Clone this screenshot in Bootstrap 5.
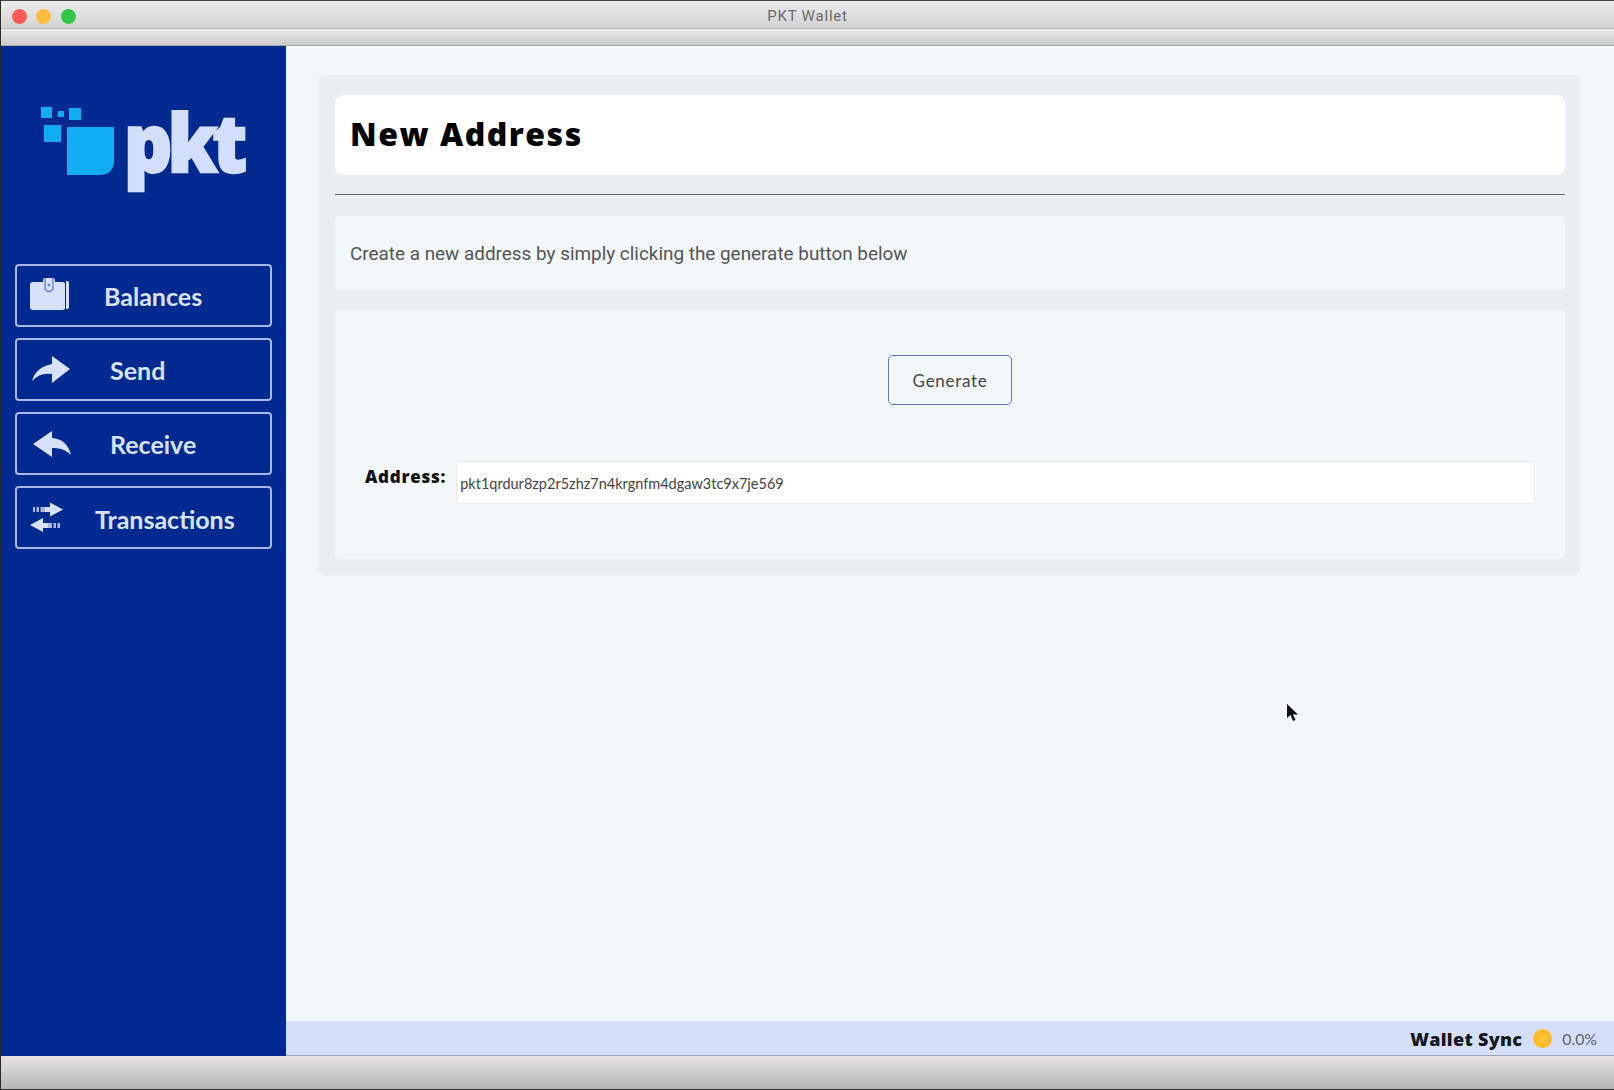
<!DOCTYPE html>
<html lang="en">
<head>
<meta charset="utf-8">
<title>PKT Wallet</title>
<link href="https://cdn.jsdelivr.net/npm/bootstrap@5.3.0/dist/css/bootstrap.min.css" rel="stylesheet">
<style>
html,body{height:100%;margin:0}
body{background:#333;overflow:hidden;font-family:"Lato","Liberation Sans",sans-serif}
.win{height:1090px;width:1614px;border-top:1px solid #444;border-left:1px solid #2a2a2a}
.tbar{height:28px;background:linear-gradient(#ebebeb,#d3d3d3);border-bottom:1px solid #b4b4b4;font:15px "Roboto","Liberation Sans",sans-serif;color:#6b6b6b;letter-spacing:.8px;padding-top:3px}
.lights{left:10.500px;top:8px;gap:9.500px}
.light{width:15px;height:15px;border-radius:50%}
.tool{height:17px;background:linear-gradient(#e9e9e9,#cbcbcb);border-bottom:1px solid #a9a9a9}
.mid{height:1010px}
.side{width:285px;background:#002a8f}
.logo{margin:61px 0 0 37px;height:90px}
.logo svg{overflow:visible}
.logo-word{font-family:"Open Sans",sans-serif;font-weight:800;font-size:80px;letter-spacing:-5px;fill:#d2defa;stroke:#d2defa;stroke-width:2.500px}
.navs{margin:67px 14px 0 14px;gap:11px}
.navb{height:63px;border:2px solid #a9b8e6;border-radius:4px;color:#d7e1fb;font-weight:700;font-size:25px;padding:2px 0 0 13px;background:transparent}
.navb:hover{color:#d7e1fb;border-color:#a9b8e6}
.navb svg{width:42px;height:42px;flex:none;margin-top:-2px}
.l1{margin-left:32px}.l2{margin-left:38px}.l3{margin-left:38px}.l4{margin-left:23px;margin-top:3px}
.mainp{background:#f2f7fa;min-width:0}
.scroll{padding:29px 34px 0 33px}
.panel{background:#e9eef0;border-radius:5px;padding:20px 15px 16px 16px;height:500px}
.head{height:80px;border-radius:8px;background:#fff;padding:0 0 4px 15px;border:0;margin-bottom:19px}
.head h1{font:800 32px "Open Sans",sans-serif;letter-spacing:1.500px;color:#000;margin:0}
.rule{height:1px;background:#666;margin-bottom:21px}
.desc{height:74px;background:#f2f7fa;border-radius:4px;border:0;padding-left:15px;margin-bottom:20px;font:18.900px "Roboto",sans-serif;color:#555}
.gen{height:249px;background:#f2f7fa;border-radius:4px;border:0;padding:45px 30px 0 30px}
.genb{width:124px;height:50px;background:#f2f7fa;border:1.500px solid #6179b8;border-radius:5px;color:#444;font:400 17px "Lato",sans-serif;letter-spacing:.7px;margin-left:523px;padding:0}
.addr{margin-top:56px;gap:10px}
.addr label{font:800 17px "Open Sans",sans-serif;letter-spacing:.75px;color:#111;margin:0;padding-top:6px;line-height:20px;white-space:nowrap}
.addr input{height:43px;border:1px solid #e6ebee;border-radius:3px;font:14.500px "Lato",sans-serif;color:#444;padding:1px 3px 0;background:#fff;box-shadow:none}
.stat{height:35px;background:#d4dff7;padding:1px 17px 0 0;border-bottom:1px solid #9ea6b8;font:15.800px "Lato",sans-serif;color:#5b6270}
.stat b{font:800 18px "Open Sans",sans-serif;letter-spacing:.3px;color:#14181f}
.dot{width:19px;height:19px;border-radius:50%;background:radial-gradient(circle at 55% 55%,#ffc53a 0,#ffb81f 55%,#f4d27a 100%);margin:0 10px 0 11px}
.foot{height:33px;background:linear-gradient(#e5e4e2,#b5b5b5)}
.ptr{position:absolute;left:1285px;top:702px;width:14px;height:20px}
</style>
</head>
<body>
<div class="win d-flex flex-column position-relative">
  <div class="tbar d-flex align-items-center justify-content-center position-relative">
    <div class="lights d-flex position-absolute">
      <span class="light" style="background:#fc5b57"></span>
      <span class="light" style="background:#fdbc40"></span>
      <span class="light" style="background:#33c748"></span>
    </div>
    PKT Wallet
  </div>
  <div class="tool"></div>
  <div class="mid d-flex">
    <aside class="side d-flex flex-column flex-shrink-0">
      <div class="logo">
        <svg width="220" height="90" viewBox="0 0 220 90" aria-label="pkt logo">
          <g fill="#10aef0">
            <rect x="3" y="0" width="11" height="11"/>
            <rect x="20" y="4" width="6" height="6"/>
            <rect x="31" y="1" width="12" height="12"/>
            <rect x="6" y="18" width="17" height="17"/>
            <path d="M29 20H76V53Q76 68 61 68H29Z"/>
          </g>
          <text class="logo-word" transform="translate(86 65) scale(.94 1)">pkt</text>
        </svg>
      </div>
      <div class="navs d-flex flex-column">
        <a class="btn navb d-flex align-items-center" href="#">
          <svg viewBox="0 0 42 42"><path fill="#d7e1fb" d="M0 10Q0 7 3 7H13V5Q13 3 15 3H23Q25 3 25 5V7H33Q35 7 35 9V33Q35 35 33 35H3Q0 35 0 32Z"/><path fill="#d7e1fb" d="M36 6H37Q39 6 39 8V32Q39 34 37 34H36Z"/><path fill="none" stroke="#6f86cc" stroke-width="1.500" d="M15 3V14Q19 19 23 14V3"/><circle cx="19" cy="10" r="1.400" fill="#6f86cc"/></svg>
          <span class="l1">Balances</span>
        </a>
        <a class="btn navb d-flex align-items-center" href="#">
          <svg viewBox="0 0 42 42"><path fill="#d7e1fb" d="M2 32Q6 18 22 15V7L40 20L22 34V25Q10 23 2 32Z"/></svg>
          <span class="l2">Send</span>
        </a>
        <a class="btn navb d-flex align-items-center" href="#">
          <svg viewBox="0 0 42 42"><path fill="#d7e1fb" d="M3 21L22 8V15Q37 16 41 32Q33 24 22 25V34Z"/></svg>
          <span class="l3">Receive</span>
        </a>
        <a class="btn navb d-flex align-items-center" href="#">
          <svg viewBox="0 0 42 42"><path fill="#d7e1fb" d="M15 10H20V5.500L33 12.500L20 19.500V15H15Z"/><path fill="#d7e1fb" d="M18 26H13V21L0 28L13 35V31H18Z"/><path fill="#a9b8e6" d="M3 10H5V15H3ZM6.500 10H9V15H6.500ZM10.500 10H15V15H10.500ZM18 26H22V31H18ZM23.500 26H26V31H23.500ZM27.500 26H30V31H27.500Z"/></svg>
          <span class="l4">Transactions</span>
        </a>
      </div>
    </aside>
    <main class="mainp flex-grow-1 d-flex flex-column">
      <div class="scroll flex-grow-1">
        <div class="panel">
          <div class="head card justify-content-center"><h1>New Address</h1></div>
          <div class="rule"></div>
          <div class="desc card justify-content-center">Create a new address by simply clicking the generate button below</div>
          <div class="gen card">
            <div><button type="button" class="btn genb">Generate</button></div>
            <div class="addr d-flex align-items-start">
              <label for="addr-out">Address:</label>
              <input id="addr-out" class="form-control" type="text" readonly value="pkt1qrdur8zp2r5zhz7n4krgnfm4dgaw3tc9x7je569">
            </div>
          </div>
        </div>
      </div>
      <div class="stat d-flex align-items-center justify-content-end">
        <b>Wallet Sync</b><span class="dot"></span><span>0.0%</span>
      </div>
    </main>
  </div>
  <div class="foot"></div>
  <svg class="ptr" viewBox="0 0 14 20"><path fill="#111" d="M1 1V15L4.500 12L7 18L9.500 17L7 11.500H12Z"/></svg>
</div>
</body>
</html>
